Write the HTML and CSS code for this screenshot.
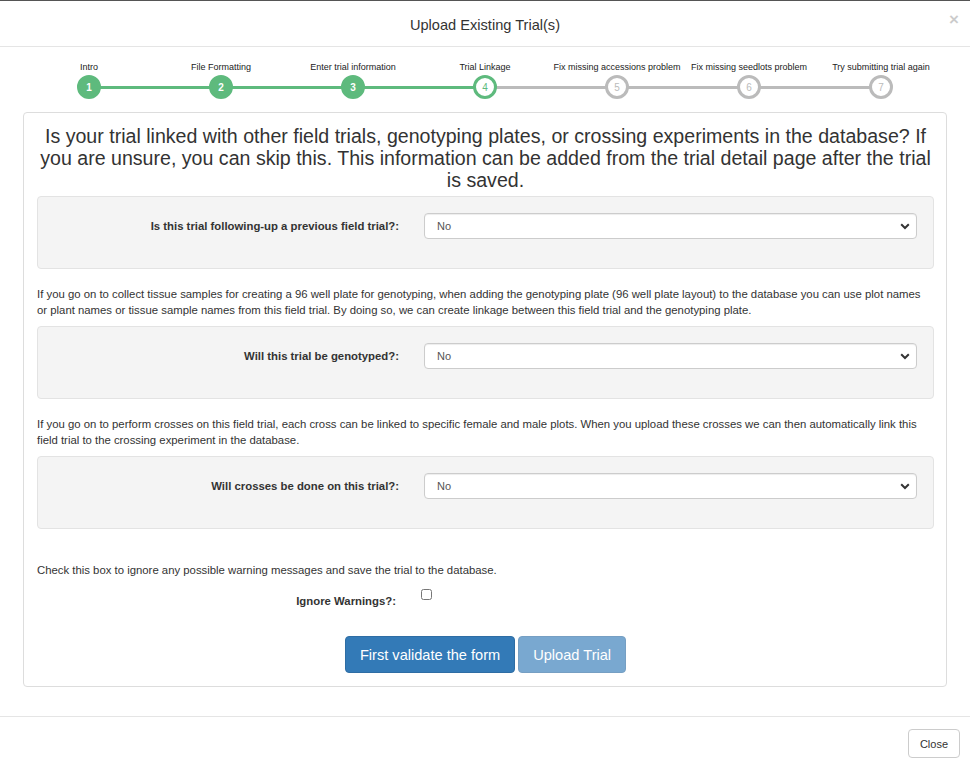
FILE: index.html
```html
<!DOCTYPE html>
<html>
<head>
<meta charset="utf-8">
<link rel="stylesheet" href="styles.css">
</head>
<body>
<div class="modal">
  <div class="modal-header">
    <h4 class="modal-title">Upload Existing Trial(s)</h4>
    <span class="close">×</span>
  </div>
  <div class="modal-body">
    <ol class="steps">
      <li class="step done"><span class="step-label">Intro</span><span class="step-dot">1</span></li>
      <li class="step done"><span class="step-label">File Formatting</span><span class="step-dot">2</span></li>
      <li class="step done"><span class="step-label">Enter trial information</span><span class="step-dot">3</span></li>
      <li class="step active"><span class="step-label">Trial Linkage</span><span class="step-dot">4</span></li>
      <li class="step"><span class="step-label">Fix missing accessions problem</span><span class="step-dot">5</span></li>
      <li class="step"><span class="step-label">Fix missing seedlots problem</span><span class="step-dot">6</span></li>
      <li class="step"><span class="step-label">Try submitting trial again</span><span class="step-dot">7</span></li>
    </ol>

    <div class="panel">
      <h3 class="panel-heading">Is your trial linked with other field trials, genotyping plates, or crossing experiments in the database? If you are unsure, you can skip this. This information can be added from the trial detail page after the trial is saved.</h3>

      <div class="well">
        <div class="form-row">
          <label class="form-label">Is this trial following-up a previous field trial?:</label>
          <div class="select-wrap">
            <select class="form-select"><option>No</option></select>
            <svg class="chev" width="10" height="7" viewBox="0 0 10 7"><path d="M1.2 1.3 L5 5 L8.8 1.3" fill="none" stroke="#333" stroke-width="2"/></svg>
          </div>
        </div>
      </div>

      <p class="help help-first">If you go on to collect tissue samples for creating a 96 well plate for genotyping, when adding the genotyping plate (96 well plate layout) to the database you can use plot names or plant names or tissue sample names from this field trial. By doing so, we can create linkage between this field trial and the genotyping plate.</p>

      <div class="well">
        <div class="form-row">
          <label class="form-label">Will this trial be genotyped?:</label>
          <div class="select-wrap">
            <select class="form-select"><option>No</option></select>
            <svg class="chev" width="10" height="7" viewBox="0 0 10 7"><path d="M1.2 1.3 L5 5 L8.8 1.3" fill="none" stroke="#333" stroke-width="2"/></svg>
          </div>
        </div>
      </div>

      <p class="help">If you go on to perform crosses on this field trial, each cross can be linked to specific female and male plots. When you upload these crosses we can then automatically link this field trial to the crossing experiment in the database.</p>

      <div class="well">
        <div class="form-row">
          <label class="form-label">Will crosses be done on this trial?:</label>
          <div class="select-wrap">
            <select class="form-select"><option>No</option></select>
            <svg class="chev" width="10" height="7" viewBox="0 0 10 7"><path d="M1.2 1.3 L5 5 L8.8 1.3" fill="none" stroke="#333" stroke-width="2"/></svg>
          </div>
        </div>
      </div>

      <p class="help help-check">Check this box to ignore any possible warning messages and save the trial to the database.</p>

      <div class="check-row">
        <label class="check-label">Ignore Warnings?:</label>
        <input type="checkbox" class="check-input">
      </div>

      <div class="actions">
        <button class="btn btn-primary">First validate the form</button>
        <button class="btn btn-primary btn-disabled">Upload Trial</button>
      </div>
    </div>
  </div>
  <div class="modal-footer">
    <button class="btn-default">Close</button>
  </div>
</div>
</body>
</html>
```

FILE: styles.css
```css
* { box-sizing: border-box; }
html, body { margin: 0; padding: 0; background: #fff; }
body {
  font-family: "Liberation Sans", Arial, sans-serif;
  font-size: 11.35px;
  color: #333;
}
.modal {
  width: 970px;
  height: 768px;
  border-top: 1px solid #555;
  display: flex;
  flex-direction: column;
}
.modal-header {
  height: 46px;
  flex: none;
  border-bottom: 1px solid #e5e5e5;
  display: flex;
  align-items: center;
  justify-content: center;
  position: relative;
}
.modal-title {
  margin: 0;
  font-size: 14.6px;
  font-weight: normal;
  color: #333;
  padding-top: 3px;
}
.close {
  position: absolute;
  right: 11px;
  top: 10px;
  font-size: 17px;
  font-weight: bold;
  color: #000;
  opacity: 0.2;
  line-height: 1;
}
.modal-body {
  padding: 14px 23px 29px;
}
.steps {
  list-style: none;
  margin: 0;
  padding: 0;
  display: flex;
}
.step {
  width: 132px;
  display: flex;
  flex-direction: column;
  align-items: center;
  position: relative;
}
.step-label {
  font-size: 9px;
  line-height: 12px;
  height: 12px;
  white-space: nowrap;
  color: #222;
  margin-bottom: 2px;
}
.step-dot {
  width: 24px;
  height: 24px;
  border-radius: 50%;
  border: 3px solid #bbb;
  background: #fff;
  color: #bbb;
  font-size: 10px;
  display: flex;
  align-items: center;
  justify-content: center;
  position: relative;
  z-index: 1;
}
.step:not(:last-child)::after {
  content: "";
  position: absolute;
  left: 66px;
  width: 132px;
  top: 25px;
  height: 3px;
  background: #bbb;
}
.step.done::after { background: #5eba7d !important; }
.step.done .step-dot {
  background: #5eba7d;
  border-color: #5eba7d;
  color: #fff;
  font-weight: bold;
}
.step.active .step-dot {
  border-color: #5eba7d;
  color: #5eba7d;
}
.panel {
  margin-top: 13px;
  border: 1px solid #ddd;
  border-radius: 4px;
  padding: 12px 12px 13px 13px;
}
.panel-heading {
  margin: 0 0 5px;
  font-size: 19.6px;
  line-height: 22px;
  font-weight: normal;
  text-align: center;
  color: #333;
}
.well {
  background: #f4f4f4;
  border: 1px solid #e3e3e3;
  border-radius: 4px;
  padding: 16px 16px 29px;
}
.form-row {
  display: grid;
  grid-template-columns: 345px 1fr;
  column-gap: 25px;
  align-items: center;
}
.form-label {
  text-align: right;
  font-weight: bold;
  font-size: 11.35px;
  color: #333;
}
.select-wrap { position: relative; }
.form-select {
  display: block;
  width: 100%;
  height: 26px;
  border: 1px solid #ccc;
  border-radius: 4px;
  background: #fff;
  padding: 0 12px;
  font-family: "Liberation Sans", Arial, sans-serif;
  font-size: 11px;
  color: #555;
  appearance: none;
  -webkit-appearance: none;
  box-shadow: inset 0 1px 1px rgba(0,0,0,0.075);
}
.chev {
  position: absolute;
  right: 7px;
  top: 10px;
  pointer-events: none;
}
.help {
  margin: 17px 10px 8px 0;
  line-height: 16px;
}
.help-check {
  margin: 33px 0 8px;
}
.check-row {
  display: grid;
  grid-template-columns: 359px 1fr;
  column-gap: 25px;
  height: 30px;
}
.check-label {
  text-align: right;
  font-weight: bold;
  padding-top: 7px;
  line-height: 16px;
}
.check-input {
  margin: 3px 0 0;
  width: 11px;
  height: 11px;
}
.actions {
  margin-top: 20px;
  display: flex;
  justify-content: center;
  gap: 3px;
}
.btn {
  font-family: "Liberation Sans", Arial, sans-serif;
  font-size: 14.6px;
  height: 37px;
  padding: 0 14px;
  border-radius: 4px;
  border: 1px solid #2e6da4;
  background: #337ab7;
  color: #fff;
}
.btn-disabled { opacity: 0.65; }
.modal-footer {
  margin-top: auto;
  border-top: 1px solid #e5e5e5;
  padding: 12px 10px 10px;
  display: flex;
  justify-content: flex-end;
}
.btn-default {
  font-family: "Liberation Sans", Arial, sans-serif;
  font-size: 11px;
  height: 29px;
  padding: 0 11px;
  border: 1px solid #ccc;
  border-radius: 4px;
  background: #fff;
  color: #333;
}
```
